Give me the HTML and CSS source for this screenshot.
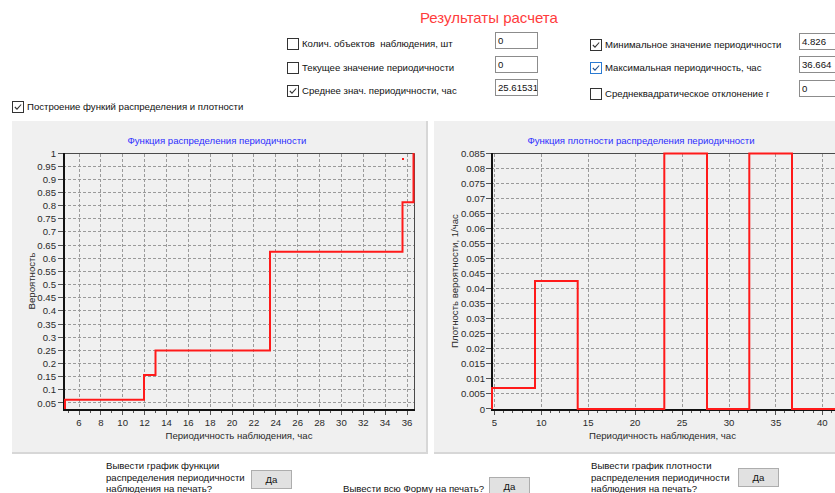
FILE: index.html
```html
<!DOCTYPE html>
<html lang="ru">
<head>
<meta charset="utf-8">
<title>Результаты расчета</title>
<link rel="stylesheet" href="styles.css">
</head>
<body>
<header class="top">
  <h1 class="title">Результаты расчета</h1>
  <div class="controls">
    <label class="chk build"><span class="box on"><svg viewBox="0 0 12 12"><polyline points="2.2,6 4.8,8.6 9.8,3"/></svg></span>Построение функий распределения и плотности</label>

    <div class="grid mid">
      <label class="chk"><span class="box"></span>Колич. объектов&nbsp; наблюдения, шт</label>
      <div class="field">0</div>
      <label class="chk"><span class="box"></span>Текущее значение периодичности</label>
      <div class="field">0</div>
      <label class="chk"><span class="box on"><svg viewBox="0 0 12 12"><polyline points="2.2,6 4.8,8.6 9.8,3"/></svg></span>Среднее знач. периодичности, час</label>
      <div class="field">25.61531</div>
    </div>

    <div class="grid right">
      <label class="chk"><span class="box on"><svg viewBox="0 0 12 12"><polyline points="2.2,6 4.8,8.6 9.8,3"/></svg></span>Минимальное значение периодичности</label>
      <div class="field">4.826</div>
      <label class="chk"><span class="box on hover"><svg viewBox="0 0 12 12"><polyline points="2.2,6 4.8,8.6 9.8,3"/></svg></span>Максимальная периодичность, час</label>
      <div class="field">36.664</div>
      <label class="chk low"><span class="box"></span>Среднеквадратическое отклонение г</label>
      <div class="field">0</div>
    </div>
  </div>
</header>

<main class="charts">
  <section class="panel">
    <svg class="chart" width="414" height="331" viewBox="0 0 414 331">
      <text class="ctitle" x="205" y="23" text-anchor="middle">Функция распределения периодичности</text>
      <path class="gridline" d="M51 45.5H403M51 58.5H403M51 71.5H403M51 84.5H403M51 97.5H403M51 110.5H403M51 124.5H403M51 137.5H403M51 150.5H403M51 163.5H403M51 176.5H403M51 189.5H403M51 203.5H403M51 216.5H403M51 229.5H403M51 242.5H403M51 255.5H403M51 268.5H403M51 281.5H403"/>
      <path class="gridline" d="M67.5 33V288M88.5 33V288M110.5 33V288M132.5 33V288M154.5 33V288M176.5 33V288M198.5 33V288M220.5 33V288M241.5 33V288M263.5 33V288M285.5 33V288M307.5 33V288M329.5 33V288M351.5 33V288M373.5 33V288M395.5 33V288"/>
      <path class="frame" d="M51 32.5H402.5V288"/>
      <path class="axis" d="M52 32V289H403"/>
      <path class="tick" d="M46 32.5h5M46 45.5h5M46 58.5h5M46 71.5h5M46 84.5h5M46 97.5h5M46 110.5h5M46 124.5h5M46 137.5h5M46 150.5h5M46 163.5h5M46 176.5h5M46 189.5h5M46 203.5h5M46 216.5h5M46 229.5h5M46 242.5h5M46 255.5h5M46 268.5h5M46 281.5h5"/>
      <path class="tick" d="M67.5 290v4M88.5 290v4M110.5 290v4M132.5 290v4M154.5 290v4M176.5 290v4M198.5 290v4M220.5 290v4M241.5 290v4M263.5 290v4M285.5 290v4M307.5 290v4M329.5 290v4M351.5 290v4M373.5 290v4M395.5 290v4M56.5 290v2M78.5 290v2M99.5 290v2M121.5 290v2M143.5 290v2M165.5 290v2M187.5 290v2M209.5 290v2M231.5 290v2M252.5 290v2M274.5 290v2M296.5 290v2M318.5 290v2M340.5 290v2M362.5 290v2M384.5 290v2"/>
      <g class="ylab" text-anchor="end">
        <text x="44" y="35.5">1</text>
        <text x="44" y="48.7">0.95</text>
        <text x="44" y="61.8">0.9</text>
        <text x="44" y="75">0.85</text>
        <text x="44" y="88.1">0.8</text>
        <text x="44" y="101.3">0.75</text>
        <text x="44" y="114.4">0.7</text>
        <text x="44" y="127.6">0.65</text>
        <text x="44" y="140.8">0.6</text>
        <text x="44" y="153.9">0.55</text>
        <text x="44" y="167.1">0.5</text>
        <text x="44" y="180.2">0.45</text>
        <text x="44" y="193.4">0.4</text>
        <text x="44" y="206.6">0.35</text>
        <text x="44" y="219.7">0.3</text>
        <text x="44" y="232.9">0.25</text>
        <text x="44" y="246">0.2</text>
        <text x="44" y="259.2">0.15</text>
        <text x="44" y="272.3">0.1</text>
        <text x="44" y="285.5">0.05</text>
      </g>
      <g class="ylab" text-anchor="middle">
        <text x="67" y="305">6</text>
        <text x="88.9" y="305">8</text>
        <text x="110.7" y="305">10</text>
        <text x="132.6" y="305">12</text>
        <text x="154.5" y="305">14</text>
        <text x="176.3" y="305">16</text>
        <text x="198.2" y="305">18</text>
        <text x="220.1" y="305">20</text>
        <text x="241.9" y="305">22</text>
        <text x="263.8" y="305">24</text>
        <text x="285.7" y="305">26</text>
        <text x="307.5" y="305">28</text>
        <text x="329.4" y="305">30</text>
        <text x="351.3" y="305">32</text>
        <text x="373.1" y="305">34</text>
        <text x="395" y="305">36</text>
      </g>
      <text class="axtitle" x="227" y="318" text-anchor="middle">Периодичность наблюдения, час</text>
      <text class="axtitle" transform="translate(22.5,160) rotate(-90)" text-anchor="middle">Вероятность</text>
      <path class="series" d="M53 288V278.7H132V254H143.5V229.4H258V130.7H390.5V81.3H401.5V32"/>
      <rect class="dot" x="390" y="37" width="2" height="2"/>
    </svg>
  </section>

  <section class="panel">
    <svg class="chart" width="414" height="331" viewBox="0 0 414 331">
      <text class="ctitle" x="207" y="23" text-anchor="middle">Функция плотности распределения периодичности</text>
      <path class="gridline" d="M57 47.5H403M57 62.5H403M57 77.5H403M57 92.5H403M57 107.5H403M57 122.5H403M57 137.5H403M57 152.5H403M57 167.5H403M57 182.5H403M57 197.5H403M57 212.5H403M57 227.5H403M57 242.5H403M57 257.5H403M57 272.5H403"/>
      <path class="gridline" d="M60.5 33V288M107.5 33V288M154.5 33V288M201.5 33V288M248.5 33V288M295.5 33V288M341.5 33V288M388.5 33V288"/>
      <path class="frame" d="M57 32.5H402.5V288"/>
      <path class="axis" d="M58 32V289H403"/>
      <path class="tick" d="M52 32.5h5M52 47.5h5M52 62.5h5M52 77.5h5M52 92.5h5M52 107.5h5M52 122.5h5M52 137.5h5M52 152.5h5M52 167.5h5M52 182.5h5M52 197.5h5M52 212.5h5M52 227.5h5M52 242.5h5M52 257.5h5M52 272.5h5M52 287.5h5"/>
      <path class="tick" d="M60.5 290v4M107.5 290v4M154.5 290v4M201.5 290v4M248.5 290v4M295.5 290v4M341.5 290v4M388.5 290v4M69.5 290v2M78.5 290v2M88.5 290v2M97.5 290v2M116.5 290v2M125.5 290v2M135.5 290v2M144.5 290v2M163.5 290v2M172.5 290v2M182.5 290v2M191.5 290v2M210.5 290v2M219.5 290v2M228.5 290v2M238.5 290v2M257.5 290v2M266.5 290v2M275.5 290v2M285.5 290v2M304.5 290v2M313.5 290v2M322.5 290v2M332.5 290v2M350.5 290v2M360.5 290v2M369.5 290v2M379.5 290v2M397.5 290v2"/>
      <g class="ylab" text-anchor="end">
        <text x="51" y="35.5">0.085</text>
        <text x="51" y="50.6">0.08</text>
        <text x="51" y="65.6">0.075</text>
        <text x="51" y="80.7">0.07</text>
        <text x="51" y="95.7">0.065</text>
        <text x="51" y="110.8">0.06</text>
        <text x="51" y="125.9">0.055</text>
        <text x="51" y="140.9">0.05</text>
        <text x="51" y="156">0.045</text>
        <text x="51" y="171">0.04</text>
        <text x="51" y="186.1">0.035</text>
        <text x="51" y="201.1">0.03</text>
        <text x="51" y="216.2">0.025</text>
        <text x="51" y="231.3">0.02</text>
        <text x="51" y="246.3">0.015</text>
        <text x="51" y="261.4">0.01</text>
        <text x="51" y="276.4">0.005</text>
        <text x="51" y="291.5">0</text>
      </g>
      <g class="ylab" text-anchor="middle">
        <text x="60.5" y="305">5</text>
        <text x="107.3" y="305">10</text>
        <text x="154.2" y="305">15</text>
        <text x="201.1" y="305">20</text>
        <text x="248" y="305">25</text>
        <text x="295" y="305">30</text>
        <text x="341.9" y="305">35</text>
        <text x="388.3" y="305">40</text>
      </g>
      <text class="axtitle" x="228.5" y="318" text-anchor="middle">Периодичность наблюдения, час</text>
      <text class="axtitle" transform="translate(23.5,160) rotate(-90)" text-anchor="middle">Плотность вероятности, 1/час</text>
      <path class="series" d="M58 288V266.9H101V160H143.7V288H230.3V32.5H273V288H315.3V32.5H358V288H403"/>
    </svg>
  </section>
</main>

<footer class="footer">
  <div class="ask ask-first">
    <p class="q q-first">Вывести график функции<br>распределения периодичности<br>наблюдения на печать?</p>
    <button class="btn b-first" type="button">Да</button>
  </div>
  <div class="ask ask-form">
    <p class="q q-form">Вывести всю Форму на печать?</p>
    <button class="btn b-form" type="button">Да</button>
  </div>
  <div class="ask ask-dens">
    <p class="q q-dens">Вывести график плотности<br>распределения периодичности<br>наблюдения на печать?</p>
    <button class="btn b-dens" type="button">Да</button>
  </div>
</footer>
</body>
</html>
```

FILE: styles.css
```css
html, body {
  margin: 0;
  padding: 0;
}

body {
  width: 835px;
  height: 493px;
  overflow: hidden;
  background: #fff;
  font-family: "Liberation Sans", Arial, sans-serif;
  font-size: 9.6px;
  color: #111;
}

/* ---------- header: title and result fields ---------- */
.top {
  height: 121px;
}

.title {
  margin: 0;
  padding: 9px 0 0 420px;
  height: 18px;
  font-size: 15px;
  line-height: 18px;
  font-weight: normal;
  color: #ff3c3c;
}

.controls {
  display: flex;
  align-items: flex-start;
  padding-top: 5px;
}

.controls > * {
  flex: none;
}

.chk {
  display: flex;
  align-items: center;
  gap: 3px;
  height: 13px;
  line-height: 13px;
  white-space: nowrap;
}

.box {
  flex: none;
  width: 12px;
  height: 12px;
  box-sizing: border-box;
  border: 1px solid #333;
  background: #fff;
  display: flex;
}

.box svg {
  width: 10px;
  height: 10px;
}

.box polyline {
  fill: none;
  stroke: #333;
  stroke-width: 1.3;
}

.box.hover {
  border-color: #2a7ad2;
}

.box.hover polyline {
  stroke: #1d4f8f;
}

.build {
  width: 275px;
  margin: 68px 0 0 12px;
}

.grid {
  display: grid;
  grid-template-rows: 24px 23px 17px;
}

.grid .chk {
  margin-top: 5px;
}

.grid .chk.low {
  margin-top: 7px;
}

.mid {
  grid-template-columns: 208px 43px;
}

.right {
  grid-template-columns: 209px 43px;
  grid-template-rows: 23px 24px 17px;
  margin: 1px 0 0 52px;
}

.field {
  height: 17px;
  box-sizing: border-box;
  border: 1px solid #8c8c8c;
  background: #fff;
  padding: 1px 2px;
  line-height: 13px;
  white-space: nowrap;
  overflow: hidden;
}

/* ---------- chart panels ---------- */
.charts {
  display: flex;
  gap: 6px;
  padding-left: 12px;
}

.panel {
  flex: none;
  width: 414px;
  height: 331px;
  background: #f0f0f0;
  border-right: 2px solid #d7d7d7;
  border-bottom: 2px solid #d7d7d7;
}

.chart {
  display: block;
  font-family: "Liberation Sans", Arial, sans-serif;
}

.ctitle {
  font-size: 9.6px;
  fill: #2d2dff;
}

.ylab text {
  font-size: 9.6px;
  fill: #2a2a2a;
}

.axtitle {
  font-size: 9.6px;
  fill: #2a2a2a;
}

.gridline {
  fill: none;
  stroke: #9a9a9a;
  stroke-width: 1;
  stroke-dasharray: 3 2;
}

.frame {
  fill: none;
  stroke: #4a4a4a;
  stroke-width: 1;
}

.axis {
  fill: none;
  stroke: #111;
  stroke-width: 2;
}

.tick {
  fill: none;
  stroke: #555;
  stroke-width: 1;
}

.series {
  fill: none;
  stroke: #ff1a1a;
  stroke-width: 2;
}

.dot {
  fill: #ff1a1a;
}

/* ---------- print prompts ---------- */
.footer {
  display: flex;
  align-items: flex-start;
}

.ask {
  display: flex;
  align-items: flex-start;
  flex: none;
}

.q {
  margin: 0;
  line-height: 11.5px;
  white-space: nowrap;
}

.btn {
  flex: none;
  width: 41px;
  height: 19px;
  padding: 0;
  box-sizing: border-box;
  border: 1px solid #adadad;
  background: #e1e1e1;
  font-family: "Liberation Sans", Arial, sans-serif;
  font-size: 9.6px;
  color: #111;
}

.ask-first {
  margin: 6px 0 0 106px;
}

.q-first {
  width: 140px;
}

.b-first {
  margin: 10px 0 0 5px;
}

.ask-form {
  margin: 23px 0 0 51px;
}

.q-form {
  width: 139px;
  margin-top: 6px;
}

.b-form {
  margin-left: 7px;
}

.ask-dens {
  margin: 6px 0 0 61px;
}

.q-dens {
  width: 137px;
}

.b-dens {
  margin: 8px 0 0 10px;
}
```
